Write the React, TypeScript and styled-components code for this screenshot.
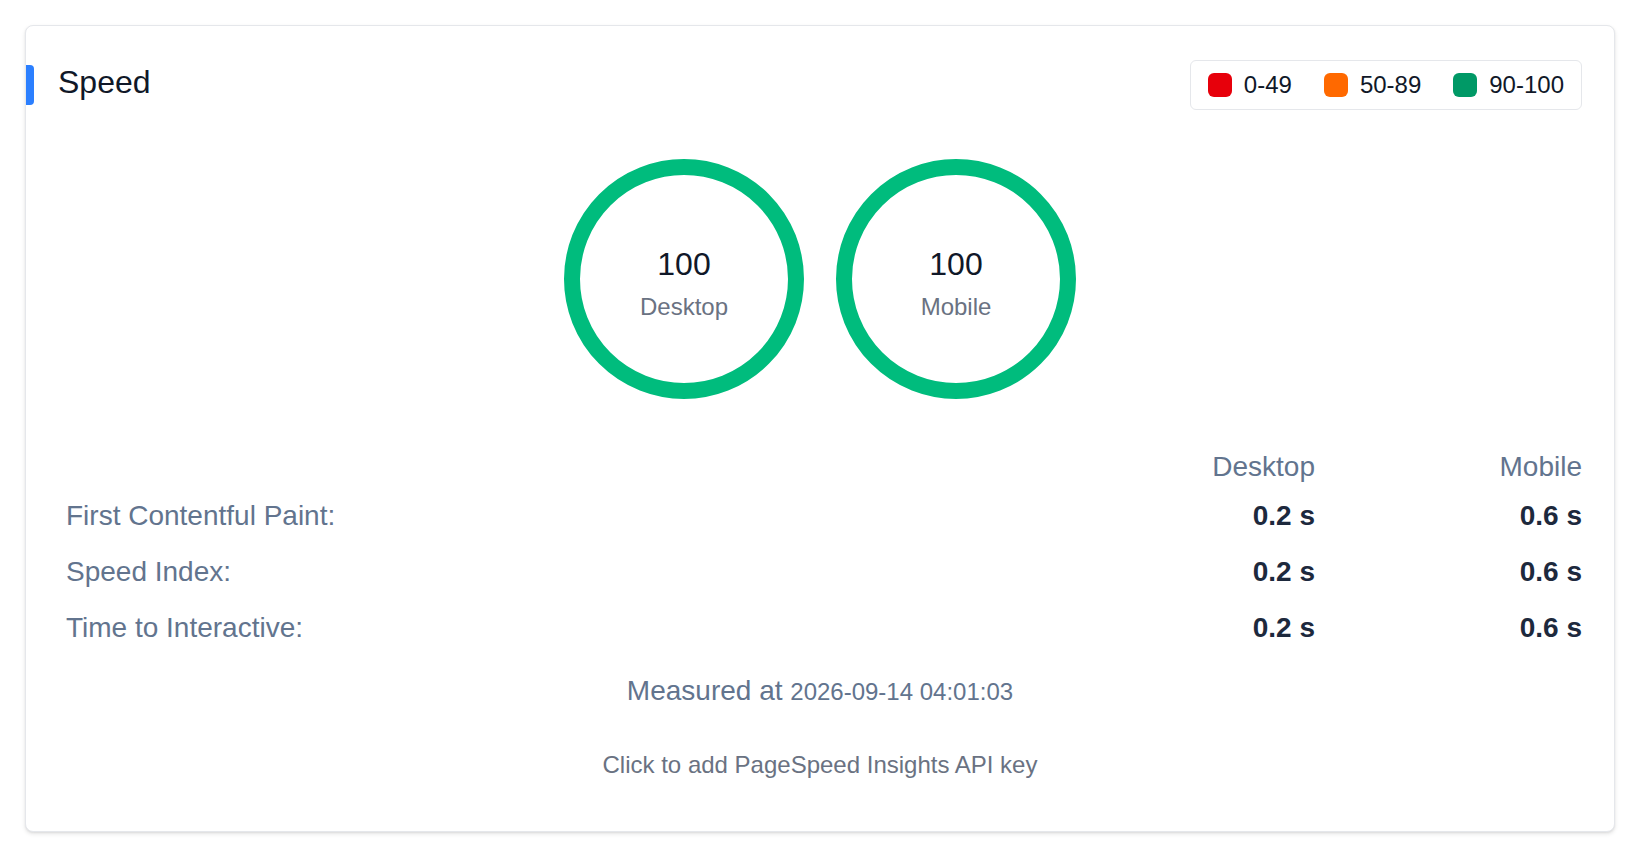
import React from 'react'
import styled, { createGlobalStyle } from 'styled-components'

const GlobalStyle = createGlobalStyle`
  * {
    box-sizing: border-box;
  }
  body {
    margin: 0;
    background: #ffffff;
    font-family: 'Liberation Sans', Arial, Helvetica, sans-serif;
    color: #101828;
  }
`

type Gauge = { score: number; label: string }
type Metric = { name: string; desktop: string; mobile: string }

const gauges: Gauge[] = [
  { score: 100, label: 'Desktop' },
  { score: 100, label: 'Mobile' }
]

const metrics: Metric[] = [
  { name: 'First Contentful Paint:', desktop: '0.2 s', mobile: '0.6 s' },
  { name: 'Speed Index:', desktop: '0.2 s', mobile: '0.6 s' },
  { name: 'Time to Interactive:', desktop: '0.2 s', mobile: '0.6 s' }
]

const legend = [
  { range: '0-49', color: '#e7000b' },
  { range: '50-89', color: '#ff6900' },
  { range: '90-100', color: '#009966' }
]

const scoreColor = (score: number) =>
  score >= 90 ? '#00bc7d' : score >= 50 ? '#ff6900' : '#e7000b'

const RADIUS = 112
const CIRCUMFERENCE = 2 * Math.PI * RADIUS

const ScoreGauge: React.FC<Gauge> = ({ score, label }) => {
  const filled = (score / 100) * CIRCUMFERENCE
  return (
    <GaugeBox>
      <svg width="240" height="240" viewBox="0 0 240 240">
        <circle
          cx="120"
          cy="120"
          r={RADIUS}
          fill="none"
          stroke={scoreColor(score)}
          strokeWidth="16"
          strokeDasharray={`${filled} ${CIRCUMFERENCE}`}
          transform="rotate(-90 120 120)"
        />
      </svg>
      <GaugeText>
        <Score>{score}</Score>
        <GaugeLabel>{label}</GaugeLabel>
      </GaugeText>
    </GaugeBox>
  )
}

const App: React.FC = () => {
  return (
    <Page>
      <GlobalStyle />
      <Card>
        <Header>
          <TitleWrap>
            <Accent />
            <Title>Speed</Title>
          </TitleWrap>
          <Legend>
            {legend.map(item => (
              <LegendItem key={item.range}>
                <Swatch color={item.color} />
                <span>{item.range}</span>
              </LegendItem>
            ))}
          </Legend>
        </Header>

        <Gauges>
          {gauges.map(g => (
            <ScoreGauge key={g.label} score={g.score} label={g.label} />
          ))}
        </Gauges>

        <Table>
          <HeadCell />
          <HeadCell>Desktop</HeadCell>
          <HeadCell>Mobile</HeadCell>
          {metrics.map(m => (
            <React.Fragment key={m.name}>
              <MetricName>{m.name}</MetricName>
              <MetricValue>{m.desktop}</MetricValue>
              <MetricValue>{m.mobile}</MetricValue>
            </React.Fragment>
          ))}
        </Table>

        <Measured>
          Measured at <span>2026-09-14 04:01:03</span>
        </Measured>

        <ApiKey>Click to add PageSpeed Insights API key</ApiKey>
      </Card>
    </Page>
  )
}

const Page = styled.div`
  padding: 25px;
`

const Card = styled.section`
  display: flex;
  flex-direction: column;
  padding: 34px 32px 48px;
  border: 1px solid #e5e7eb;
  border-radius: 8px;
  background: #ffffff;
  box-shadow: 0 2px 4px rgba(0, 0, 0, 0.1), 0 1px 2px rgba(0, 0, 0, 0.06);
`

const Header = styled.div`
  display: flex;
  align-items: center;
  justify-content: space-between;
  height: 50px;
  margin-left: -32px;
`

const TitleWrap = styled.div`
  display: flex;
  align-items: center;
  gap: 24px;
`

const Accent = styled.div`
  width: 8px;
  height: 40px;
  border-radius: 0 4px 4px 0;
  background: #2b7fff;
`

const Title = styled.h2`
  margin: 0 0 6px;
  font-size: 32px;
  line-height: 40px;
  font-weight: 400;
  color: #101828;
`

const Legend = styled.div`
  display: flex;
  align-items: center;
  gap: 32px;
  height: 50px;
  padding: 0 17px;
  border: 1px solid #e5e7eb;
  border-radius: 6px;
`

const LegendItem = styled.div`
  display: flex;
  align-items: center;
  gap: 12px;
  font-size: 24px;
  line-height: 32px;
  color: #101828;
`

const Swatch = styled.span<{ color: string }>`
  width: 24px;
  height: 24px;
  border-radius: 6px;
  background: ${props => props.color};
`

const Gauges = styled.div`
  display: flex;
  justify-content: center;
  gap: 32px;
  margin-top: 49px;
`

const GaugeBox = styled.div`
  display: grid;
  width: 240px;
  height: 240px;

  & > * {
    grid-area: 1 / 1;
  }
`

const GaugeText = styled.div`
  display: flex;
  flex-direction: column;
  align-items: center;
  justify-content: center;
  gap: 5px;
  padding-top: 11px;
`

const Score = styled.div`
  font-size: 32px;
  line-height: 40px;
  color: #101828;
`

const GaugeLabel = styled.div`
  font-size: 24px;
  line-height: 36px;
  color: #6a7282;
`

const Table = styled.div`
  display: grid;
  grid-template-columns: 1fr 267px 267px;
  grid-auto-rows: 56px;
  grid-template-rows: 42px;
  align-items: center;
  margin-top: 47px;
  font-size: 28px;
`

const HeadCell = styled.div`
  text-align: right;
  line-height: 42px;
  color: #62748e;
`

const MetricName = styled.div`
  padding-left: 8px;
  line-height: 56px;
  color: #62748e;
`

const MetricValue = styled.div`
  text-align: right;
  line-height: 56px;
  font-weight: 700;
  color: #1d293d;
`

const Measured = styled.p`
  margin: 14px 0 0;
  text-align: center;
  font-size: 28px;
  line-height: 42px;
  color: #62748e;

  span {
    font-size: 24px;
    line-height: 1;
  }
`

const ApiKey = styled.button`
  align-self: center;
  margin-top: 35px;
  padding: 0;
  border: none;
  background: none;
  font-family: inherit;
  font-size: 24px;
  line-height: 36px;
  color: #6a7282;
  cursor: pointer;
`

export default App
